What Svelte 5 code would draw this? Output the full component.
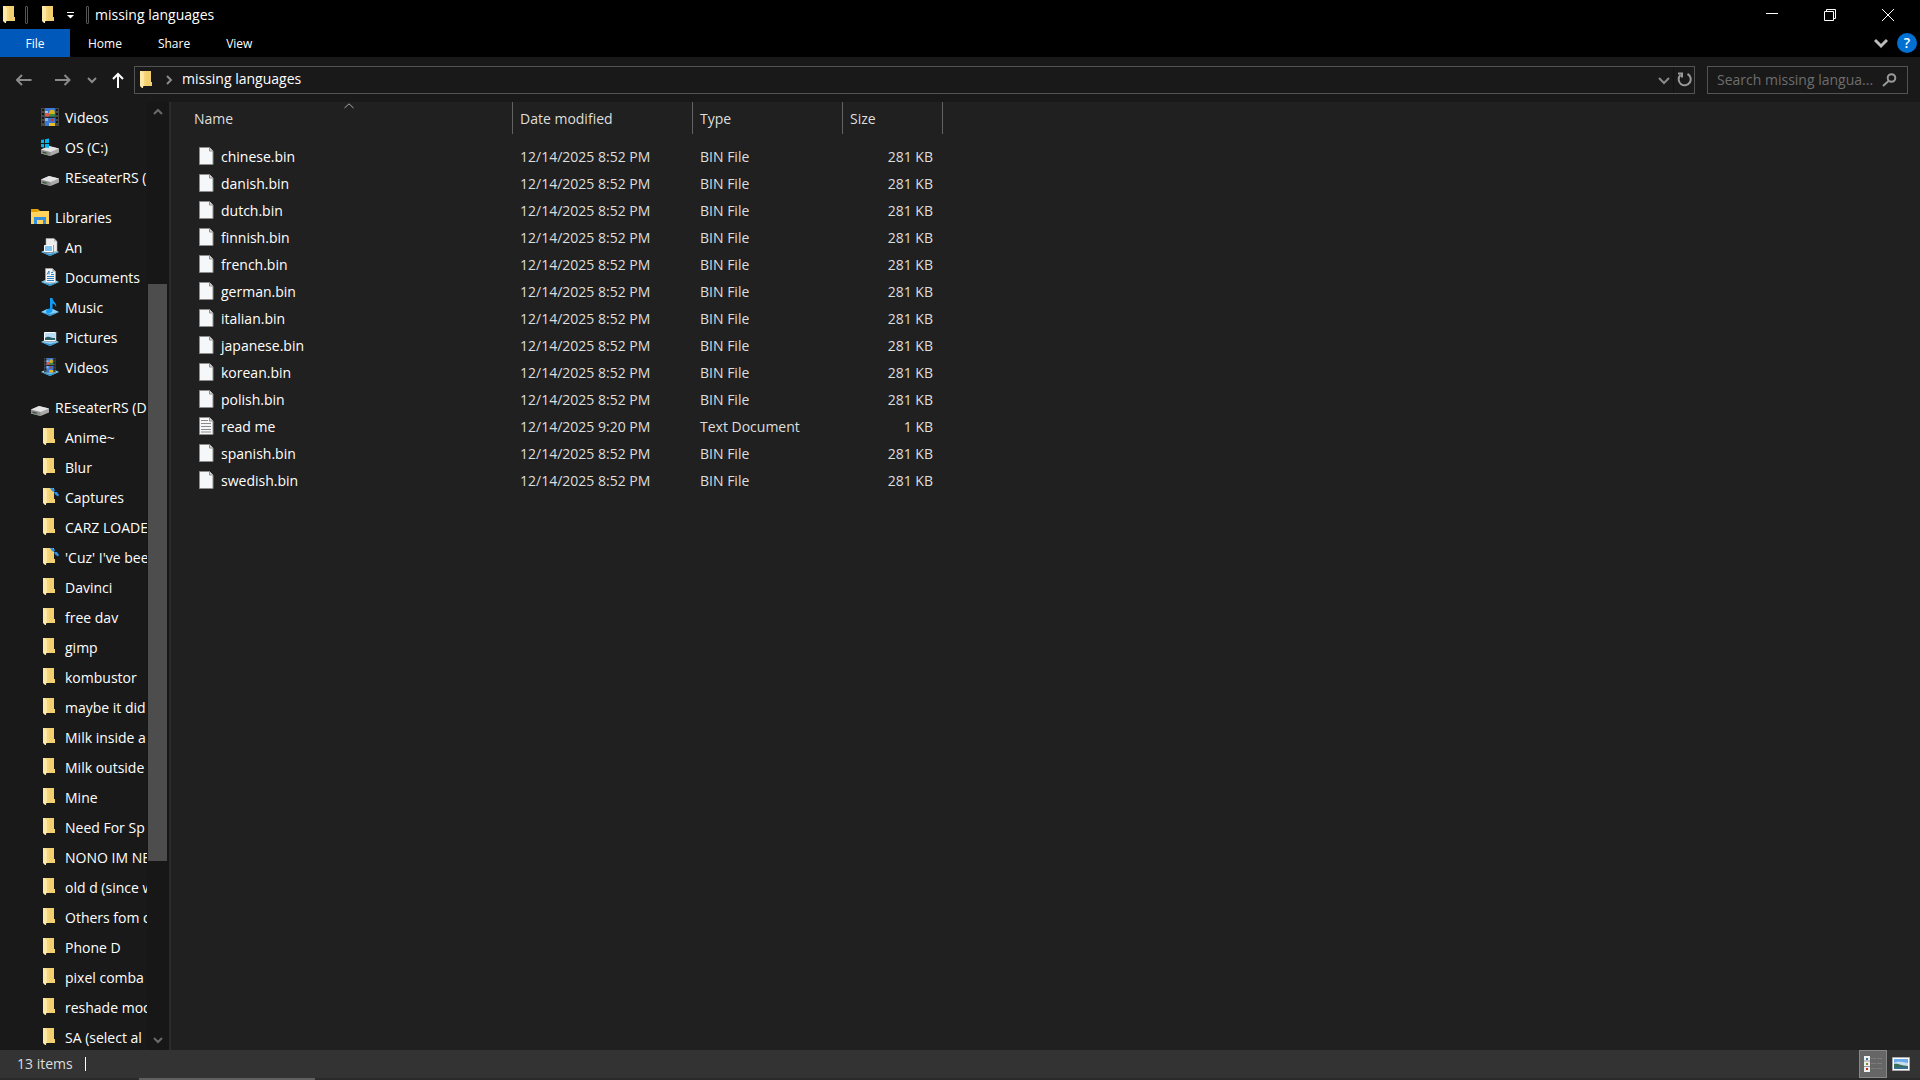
<script>
	const modified = '12/14/2025 8:52 PM';
	const names = ['chinese', 'danish', 'dutch', 'finnish', 'french', 'german', 'italian', 'japanese', 'korean', 'polish', 'read me', 'spanish', 'swedish'];
	const files = names.map((name) => {
		if (name === 'read me') {
			return { name, date: '12/14/2025 9:20 PM', type: 'Text Document', size: '1 KB', text: true };
		}
		return { name: name + '.bin', date: modified, type: 'BIN File', size: '281 KB', text: false };
	});

	const folders = ['Anime~', 'Blur', 'Captures', 'CARZ LOADE', "'Cuz' I've bee", 'Davinci', 'free dav', 'gimp', 'kombustor', 'maybe it did', 'Milk inside a', 'Milk outside', 'Mine', 'Need For Sp', 'NONO IM NE', 'old d (since w', 'Others fom d', 'Phone D', 'pixel comba', 'reshade mod', 'SA (select al'];
	const pinned = ['Captures', "'Cuz' I've bee"];

	const groups = [
		{
			items: [
				{ label: 'Videos', icon: 'video' },
				{ label: 'OS (C:)', icon: 'osdrive' },
				{ label: 'REseaterRS (', icon: 'drive' }
			]
		},
		{
			head: { label: 'Libraries', icon: 'libraries' },
			items: [
				{ label: 'An', icon: 'lib-generic' },
				{ label: 'Documents', icon: 'lib-docs' },
				{ label: 'Music', icon: 'lib-music' },
				{ label: 'Pictures', icon: 'lib-pics' },
				{ label: 'Videos', icon: 'lib-video' }
			]
		},
		{
			head: { label: 'REseaterRS (D', icon: 'drive' },
			items: folders.map((label) => ({ label, icon: pinned.includes(label) ? 'folder-sync' : 'folder' }))
		}
	];
</script>

{#snippet film()}
	<path d="M0 0h18v18H0z" fill="#484848" />
	<path d="M4 0h10v18H4z" fill="#3b78d8" />
	<path d="M4 8.500h10v1.500H4z" fill="#222" />
	<path d="M4 5h4v3.500H4z" fill="#d9584a" />
	<path d="M4 3h3v2H4z" fill="#9cc8ef" />
	<circle cx="11" cy="4.500" r="2.800" fill="#d6b21e" />
	<path d="M9 6h5v2.500H9z" fill="#3b8a3a" />
	<circle cx="11" cy="12" r="1.500" fill="#c33c25" />
	<path d="M8 15h6v3H8z" fill="#e3be27" />
	<path d="M4 10h3v3H4z" fill="#7fb4ef" />
	<path d="M1 1h2v2H1zM1 5h2v2H1zM1 9h2v2H1zM1 13h2v2H1zM15 1h2v2h-2zM15 5h2v2h-2zM15 9h2v2h-2zM15 13h2v2h-2z" fill="#161616" />
{/snippet}

{#snippet drive()}
	<path d="M0 11.500 8 8l10 2.500v4L9.500 18 0 15.500z" fill="#a9a9a9" />
	<path d="M0 11.500 8 8l10 2.500-8.500 3.500z" fill="#e4e4e4" />
	<path d="M0 11.700 9.500 14.200V18L0 15.500z" fill="#8d8d8d" />
	<path d="M1.500 13.500 7 15v1.300L1.500 14.800z" fill="#444" />
	<path d="M5.500 15h1.500v1.500H5.500z" fill="#3dbb4a" />
{/snippet}

{#snippet base()}
	<path d="M0 14 6 11h6l6 3-9 4z" fill="#8ad0f2" />
	<path d="M0 14 9 18l9-4-9 2z" fill="#3190c9" />
{/snippet}

{#snippet folder()}
	<path d="M4 0h10v11h1v4H6z" fill="#f6d67a" />
	<path d="M9 0h5v11h1v4H9z" fill="#efc963" opacity=".5" />
	<path d="M3 0h2l2 2v13l-1 .500V17H5l-2-2z" fill="#ffe8a6" />
{/snippet}

{#snippet icon(kind)}
	<svg class="icon" viewBox="0 0 18 18" aria-hidden="true">
		{#if kind === 'folder'}
			<g transform="translate(-1)">{@render folder()}</g>
		{:else if kind === 'folder-sync'}
			<g transform="translate(-1)">{@render folder()}</g>
			<path d="M9 0h3l2 2-1 2-2-1zM13 4l3 0 2 3-1 1.500-3-2z" fill="#2f8fe0" />
		{:else if kind === 'video'}
			{@render film()}
		{:else if kind === 'drive'}
			{@render drive()}
		{:else if kind === 'osdrive'}
			{@render drive()}
			<path d="M0 2l3-.500V5H0zM4 1.300 8 .500V5H4zM0 6h3v3.500L0 9zM4 6h4v4l-4-.500z" fill="#00b7f1" />
		{:else if kind === 'libraries'}
			<path d="M0 1h7l2 2h9v3H0z" fill="#e2a100" />
			<path d="M0 4h6l2-1h10v13H0z" fill="#ffd35c" />
			<path d="M3 16V9h12v7h-3v-4H6v4z" fill="#3490df" />
		{:else}
			{@render base()}
			{#if kind === 'lib-generic'}
				<path d="M5 .500h8l3 3v10H5z" fill="#eee" stroke="#aaa" stroke-width=".600" />
				<path d="M13 .500v3h3" fill="#bbb" />
				<path d="M3.500 7.500h8v6h-8z" fill="#7fc3f4" stroke="#fff" />
				<path d="M3 14.500h9.500V7" fill="none" stroke="#777" stroke-width=".700" />
			{:else if kind === 'lib-docs'}
				<path d="M4.500 .500h7l3 3v11h-10z" fill="#f5f5f5" stroke="#aaa" stroke-width=".600" />
				<path d="M11.500 .500v3h3z" fill="#999" />
				<path d="M6 6.500 8 3v3.500M10 4.500h2M10 6.500h3M6 8.500h7M6 10.500h7M6 12.500h7" stroke="#2a83ca" fill="none" />
			{:else if kind === 'lib-music'}
				<path d="M9 0h2.500c0 4 5 5 3.500 9-1-3-2.500-3-3.500-3.500V12c0 4-6.500 4.500-6.500 1.500C5 11.500 7 10.500 9 10.500z" fill="#129cf5" />
			{:else if kind === 'lib-pics'}
				<path d="M3.500 4.500h11v8h-11z" fill="#b9dcf7" stroke="#fff" />
				<path d="M4 10c4-3 5 0 10 0v2H4z" fill="#285d64" />
				<path d="M3 13.500h12V4" fill="none" stroke="#999" stroke-width=".700" />
			{:else}
				<g transform="translate(3) scale(.65 .8)">{@render film()}</g>
			{/if}
		{/if}
	</svg>
{/snippet}

{#snippet chevron(cls, d)}
	<svg class="chev {cls}" viewBox="0 0 14 14" aria-hidden="true"><path {d} /></svg>
{/snippet}

<div class="window">
	<header class="titlebar">
		{@render icon('folder')}
		<span class="grip"></span>
		<button class="quick" aria-label="New folder">{@render icon('folder')}</button>
		<button class="quick more" aria-label="Customize Quick Access Toolbar">
			<svg width="8" height="8" viewBox="0 0 8 8"><path d="M0 1.500h7" stroke="#fff" /><path d="M0 4h7L3.500 7.500z" fill="#fff" /></svg>
		</button>
		<span class="grip"></span>
		<h1>missing languages</h1>
		<div class="controls">
			<button aria-label="Minimize"><svg viewBox="0 0 12 12"><path d="M0 4.500h12" /></svg></button>
			<button aria-label="Restore"><svg viewBox="0 0 12 12"><path d="M.500 2.500h9v9h-9zM2.500 2V.500h9v9H10" /></svg></button>
			<button aria-label="Close"><svg viewBox="0 0 12 12"><path d="M0 0l12 12M12 0 0 12" /></svg></button>
		</div>
	</header>

	<nav class="tabs">
		<button class="file">File</button>
		<button>Home</button>
		<button>Share</button>
		<button>View</button>
		<button class="expand" aria-label="Expand the Ribbon">{@render chevron('bold', 'M1 4l6 6 6-6')}</button>
		<button class="help" aria-label="Help">?</button>
	</nav>

	<div class="navbar">
		<div class="history">
			<button aria-label="Back"><svg width="16" height="12" viewBox="0 0 16 12"><path d="M15.500 6H1M6 1 1 6l5 5" /></svg></button>
			<button aria-label="Forward"><svg width="16" height="12" viewBox="0 0 16 12"><path d="M0 6h14.500M9.500 1l5 5-5 5" /></svg></button>
			<button class="recent" aria-label="Recent locations">{@render chevron('', 'M3 5l4 4 4-4')}</button>
			<button class="up" aria-label="Up"><svg width="12" height="16" viewBox="0 0 12 16"><path d="M6 16V2M1 7l5-5 5 5" /></svg></button>
		</div>
		<div class="address">
			{@render icon('folder')}
			{@render chevron('crumb', 'M5 3l4 4-4 4')}
			<button class="path">missing languages</button>
			<button class="drop" aria-label="Previous locations">{@render chevron('', 'M2 5l5 5 5-5')}</button>
			<button class="refresh" aria-label="Refresh">
				<svg width="15" height="15" viewBox="0 0 15 15"><path d="M10.500 2A6 6 0 1 1 3.500 3M1 1.500h4v4" /></svg>
			</button>
		</div>
		<label class="search">
			<input type="text" placeholder="Search missing langua..." aria-label="Search missing languages" />
			<svg width="15" height="14" viewBox="0 0 15 14"><circle cx="9.500" cy="5" r="3.800" /><path d="M6.500 8 1 13" /></svg>
		</label>
	</div>

	<div class="body">
		<aside>
			<div class="tree">
				{#each groups as group}
					<ul>
						{#if group.head}
							<li class="head"><a href="#head">{@render icon(group.head.icon)}<span>{group.head.label}</span></a></li>
						{/if}
						{#each group.items as item}
							<li><a href="#item">{@render icon(item.icon)}<span>{item.label}</span></a></li>
						{/each}
					</ul>
				{/each}
			</div>
			<div class="scrollbar">
				<button aria-label="Scroll up">{@render chevron('bold', 'M3 9l4-4 4 4')}</button>
				<span class="before"></span>
				<span class="thumb"></span>
				<span class="after"></span>
				<button aria-label="Scroll down">{@render chevron('bold', 'M3 5l4 4 4-4')}</button>
			</div>
		</aside>

		<main>
			<table>
				<thead>
					<tr>
						<th class="name">
							Name
							<svg class="sort" width="10" height="6" viewBox="0 0 10 6"><path d="M.500 5 5 .800 9.500 5" /></svg>
						</th>
						<th class="date">Date modified</th>
						<th class="type">Type</th>
						<th class="size">Size</th>
					</tr>
				</thead>
				<tbody>
					{#each files as file}
						<tr>
							<td>
								<div class="entry">
									<svg width="15" height="18" viewBox="0 0 15 18" aria-hidden="true">
										<path d="M.500.500h10l3.500 3.500v13.500H.500z" fill="#f6f7f8" stroke="#8d8d8d" />
										<path d="M10.500.500v3.500H14" fill="#ddd" stroke="#8d8d8d" />
										{#if file.text}
											<path d="M2 3.500h7M2 6.500h10M2 9.500h10M2 12.500h10M2 15h10" stroke="#8a8a8a" />
										{/if}
									</svg>
									<span>{file.name}</span>
								</div>
							</td>
							<td>{file.date}</td>
							<td>{file.type}</td>
							<td class="num">{file.size}</td>
						</tr>
					{/each}
				</tbody>
			</table>
		</main>
	</div>

	<footer>
		<span class="count">{files.length} items</span>
		<div class="views">
			<button class="active" aria-label="Details">
				<svg width="18" height="16" viewBox="0 0 18 16">
					<path d="M0 0h6v16H0z" fill="#eee" />
					<path d="M0 5h6M0 10.500h6" stroke="#999" />
					<path d="M2 2h2v2H2z" fill="#297b91" /><path d="M2 7h2v2H2z" fill="#7d8b25" /><path d="M2 12h2v2H2z" fill="#b43319" />
					<path d="M7 2.500h5M13 2.500h5M7 7.500h5M13 7.500h5M7 12.500h5M13 12.500h5" stroke="#7c7c7c" />
				</svg>
			</button>
			<button aria-label="Large icons">
				<svg width="18" height="14" viewBox="0 0 18 14">
					<path d="M.500.500h17v13H.500z" fill="#fff" stroke="#aaa" />
					<path d="M2 2h14v10H2z" fill="#6aa9ee" />
					<path d="M2 6c4-2 7-1 14 0v3H2z" fill="#c6e0ee" />
					<path d="M2 7c4-1 7 2 14 2v1H2z" fill="#3b6e54" />
					<path d="M2 10h14v2H2z" fill="#356f91" />
				</svg>
			</button>
		</div>
	</footer>
	<div class="edge"><span></span></div>
</div>

<style>
:global(body) {
	margin: 0;
	background: #202020;
}

.window {
	display: flex;
	flex-direction: column;
	height: 100vh;
	overflow: hidden;
	font: 14px/20px "Open Sans", "Noto Sans", sans-serif;
	color: #fff;
}

button {
	display: flex;
	align-items: center;
	justify-content: center;
	margin: 0;
	padding: 0;
	border: none;
	background: none;
	color: inherit;
	font: inherit;
}

svg {
	flex: none;
	display: block;
}

.icon {
	width: 18px;
	height: 18px;
}

.chev {
	width: 14px;
	height: 14px;
	fill: none;
	stroke: #8a8a8a;
	stroke-width: 2;
}

.titlebar {
	display: flex;
	align-items: center;
	flex: none;
	height: 29px;
	padding-left: 1px;
	background: #000;
}

.grip {
	box-sizing: border-box;
	width: 3px;
	height: 18px;
	margin-left: 6px;
	border: 1px solid #555;
	border-radius: 1px;
}

.quick {
	margin-left: 12px;
}

.quick.more {
	margin-right: 5px;
	margin-left: 9px;
}

h1 {
	flex: 1;
	margin: 0 0 0 6px;
	font-size: 14px;
	font-weight: 400;
}

.controls {
	display: flex;
	align-self: stretch;
	padding-right: 3px;
}

.controls button {
	width: 58px;
}

.controls svg {
	width: 12px;
	height: 12px;
	fill: none;
	stroke: #fff;
}

.tabs {
	display: flex;
	flex: none;
	height: 28px;
	padding-right: 3px;
	background: #000;
	font-size: 12px;
}

.tabs button {
	padding: 1px 18px 0;
}

.tabs .file {
	width: 70px;
	background: #0058bb;
}

.tabs .expand {
	margin-left: auto;
	padding: 0 9px;
}

.expand :global(.chev) {
	stroke: #bbb;
	stroke-width: 3;
}

.tabs .help {
	align-self: center;
	width: 20px;
	height: 20px;
	padding: 0;
	border-radius: 50%;
	background: #0070d2;
	font-size: 14px;
	font-weight: 600;
}

.navbar {
	display: flex;
	align-items: center;
	flex: none;
	height: 45px;
	padding-right: 12px;
	background: #191919;
}

.history {
	display: flex;
	align-items: center;
	width: 134px;
}

.history svg {
	fill: none;
	stroke: #8a8a8a;
	stroke-width: 2;
}

.history button {
	width: 39px;
	margin-left: 4px;
}

.history button + button {
	margin-left: 0;
}

.history .recent {
	width: 20px;
}

.history .up {
	width: 32px;
}

.history .up svg {
	stroke: #fff;
}

.address,
.search {
	display: flex;
	align-items: center;
	box-sizing: border-box;
	height: 28px;
	border: 1px solid #535353;
}

.address {
	flex: 1;
	padding-left: 3px;
}

.crumb {
	margin: 0 6px;
}

.path {
	line-height: 18px;
	padding-bottom: 2px;
}

.drop {
	width: 20px;
	height: 26px;
	margin-left: auto;
	border-right: 1px solid #111;
}

.refresh {
	width: 20px;
}

.refresh svg,
.search svg {
	fill: none;
	stroke: #999;
	stroke-width: 2;
}

.search {
	width: 201px;
	margin-left: 12px;
	padding: 0 10px 0 9px;
}

.search input {
	flex: 1;
	min-width: 0;
	padding: 0;
	border: none;
	outline: none;
	background: none;
	color: #fff;
	font: inherit;
}

.search input::placeholder {
	color: #6d6d6d;
	opacity: 1;
}

.body {
	display: flex;
	flex: 1;
	min-height: 0;
}

aside {
	display: flex;
	width: 169px;
	border-right: 2px solid #2b2b2b;
	background: #191919;
}

.tree {
	flex: 1;
	min-width: 0;
	overflow: hidden;
}

ul {
	margin: 0 0 10px;
	padding: 0;
	list-style: none;
}

li a {
	display: flex;
	align-items: center;
	gap: 6px;
	height: 30px;
	padding-left: 41px;
	color: #fff;
	line-height: 22px;
	text-decoration: none;
	white-space: nowrap;
}

li span {
	padding-top: 2px;
}

li.head a {
	padding-left: 31px;
}

.scrollbar {
	display: flex;
	flex-direction: column;
	width: 22px;
	background: #171717;
}

.scrollbar button {
	height: 20px;
}

.scrollbar :global(.chev) {
	stroke: #6b6b6b;
}

.before {
	flex: 162;
}

.thumb {
	flex: 577;
	margin: 0 2px 0 1px;
	background: #4d4d4d;
}

.after {
	flex: 169;
}

main {
	flex: 1;
	background: #202020;
}

table {
	width: 772px;
	border-collapse: separate;
	border-spacing: 0;
	table-layout: fixed;
}

th,
td {
	padding: 0 8px 0 7px;
	text-align: left;
	white-space: nowrap;
}

th {
	box-sizing: border-box;
	height: 32px;
	padding-top: 2px;
	border-right: 1px solid #636363;
	color: #dedede;
	font-weight: 400;
}

th.name {
	position: relative;
	width: 342px;
	padding-left: 23px;
}

th.date {
	width: 180px;
}

th.type {
	width: 150px;
}

th.size {
	width: 100px;
}

.sort {
	position: absolute;
	top: 1px;
	left: calc(50% + 2px);
	fill: none;
	stroke: #aaa;
}

tbody::before {
	content: "";
	display: table-row;
	height: 9px;
}

td {
	height: 27px;
	color: #dedede;
}

.num {
	padding-right: 10px;
	text-align: right;
}

.entry {
	display: flex;
	align-items: center;
	gap: 7px;
	padding-left: 21px;
	color: #fff;
}

.entry svg {
	margin-bottom: 2px;
}

footer {
	display: flex;
	align-items: center;
	justify-content: space-between;
	flex: none;
	height: 28px;
	background: #333;
}

.count {
	margin-left: 17px;
	padding-right: 12px;
	border-right: 1px solid #fff;
	color: #dedede;
	line-height: 14px;
}

.views {
	display: flex;
	align-self: stretch;
	padding-right: 5px;
}

.views button {
	box-sizing: border-box;
	width: 28px;
}

.views .active {
	border: 1px solid #878787;
	background: #666;
}

.edge {
	flex: none;
	height: 2px;
	padding-left: 139px;
	background: #2a2a2a;
}

.edge span {
	display: block;
	width: 176px;
	height: 2px;
	background: #606060;
}
</style>
